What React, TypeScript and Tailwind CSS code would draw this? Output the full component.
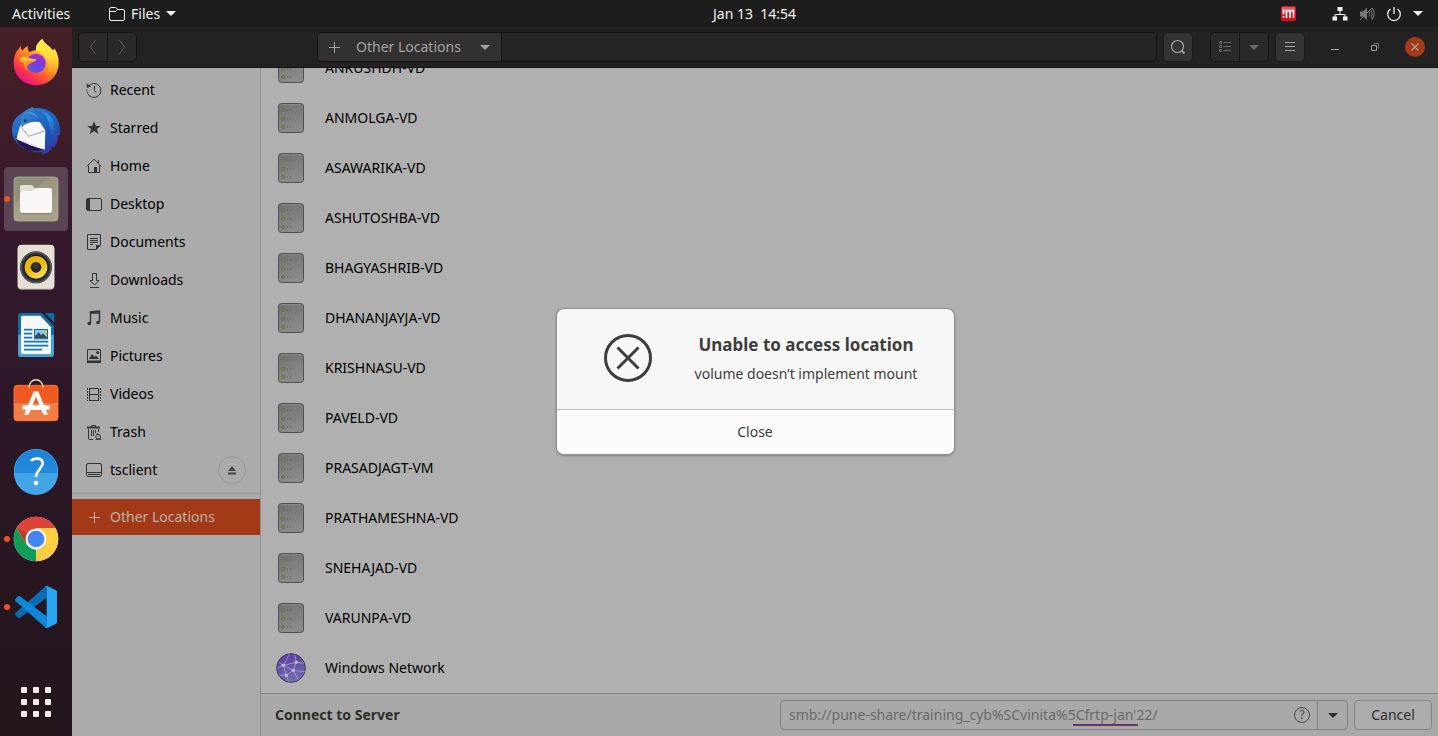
import type { ReactNode } from "react";

const hosts = [
  "ANKUSHDH-VD",
  "ANMOLGA-VD",
  "ASAWARIKA-VD",
  "ASHUTOSHBA-VD",
  "BHAGYASHRIB-VD",
  "DHANANJAYJA-VD",
  "KRISHNASU-VD",
  "PAVELD-VD",
  "PRASADJAGT-VM",
  "PRATHAMESHNA-VD",
  "SNEHAJAD-VD",
  "VARUNPA-VD",
];

/* ---------- dock icons ---------- */

function DockSvg({ viewBox, children }: { viewBox: string; children: ReactNode }) {
  return (
    <svg viewBox={viewBox} className="size-12" aria-hidden="true">
      {children}
    </svg>
  );
}

function FirefoxIcon() {
  return (
    <DockSvg viewBox="36 117 144 144">
      <defs>
        <linearGradient id="ffBody" x1="0.85" y1="0.1" x2="0.25" y2="0.95">
          <stop offset="0" stopColor="#fff44f" />
          <stop offset="0.3" stopColor="#ffb52b" />
          <stop offset="0.55" stopColor="#ff7a26" />
          <stop offset="0.78" stopColor="#ff3a4a" />
          <stop offset="1" stopColor="#e2127e" />
        </linearGradient>
        <linearGradient id="ffFlame" x1="0.4" y1="0" x2="0.4" y2="1">
          <stop offset="0" stopColor="#fff44f" />
          <stop offset="0.5" stopColor="#ffd83a" />
          <stop offset="1" stopColor="#ff9a2a" stopOpacity="0" />
        </linearGradient>
        <linearGradient id="ffGlobe" x1="0.7" y1="0" x2="0.3" y2="1">
          <stop offset="0" stopColor="#a32bd6" />
          <stop offset="0.5" stopColor="#7a3be0" />
          <stop offset="1" stopColor="#4f5fd8" />
        </linearGradient>
        <linearGradient id="ffFace" x1="0" y1="0" x2="0.7" y2="1">
          <stop offset="0" stopColor="#ffbd2e" />
          <stop offset="1" stopColor="#ff6b2b" />
        </linearGradient>
      </defs>
      <path
        d="M127 117C130 128 147 137 157 149C160 153 163 150 162 145C173 159 177 175 176 190C175 230 145 256 109 256C70 256 41 228 41 190C41 172 46 156 56 148L61 137C62 143 64 148 67 152L74 144L84 138C82 146 84 152 89 157C96 152 104 151 109 150C107 138 113 128 127 117Z"
        fill="url(#ffBody)"
      />
      <path
        d="M127 117C130 128 147 137 157 149C160 153 163 150 162 145C176 165 178 192 168 212C160 228 146 234 136 228C150 208 146 178 126 162C118 156 110 154 108 150C107 138 113 128 127 117Z"
        fill="url(#ffFlame)"
      />
      <circle cx="108" cy="190" r="29" fill="url(#ffGlobe)" />
      <path
        d="M57 178C64 168 78 168 88 174C94 177 102 176 109 178C108 185 100 186 94 189C82 193 78 204 84 213C76 210 70 202 72 190C66 190 60 184 57 178Z"
        fill="url(#ffFace)"
      />
      <path d="M60 176C72 170 88 176 107 179C96 183 76 184 60 176Z" fill="#ffcf3a" />
    </DockSvg>
  );
}

function ThunderbirdIcon() {
  return (
    <DockSvg viewBox="36 321 144 144">
      <defs>
        <linearGradient id="tbBody" x1="0.2" y1="0" x2="0.8" y2="1">
          <stop offset="0" stopColor="#2a78cc" />
          <stop offset="0.5" stopColor="#1f62be" />
          <stop offset="1" stopColor="#37349c" />
        </linearGradient>
        <linearGradient id="tbHead" x1="0" y1="0" x2="1" y2="1">
          <stop offset="0" stopColor="#3c8fd6" />
          <stop offset="1" stopColor="#1b5fb6" />
        </linearGradient>
        <linearGradient id="tbWing" x1="0" y1="0" x2="0.6" y2="1">
          <stop offset="0" stopColor="#1e7fd4" stopOpacity="0.2" />
          <stop offset="0.5" stopColor="#2b9ae6" />
          <stop offset="1" stopColor="#2057b8" stopOpacity="0.4" />
        </linearGradient>
      </defs>
      <path
        d="M90 327C125 318 160 332 172 358C179 373 182 392 180 407L174 404C175 420 170 434 162 443L158 438C154 452 142 461 124 464L128 456C110 460 78 452 60 438C44 424 36 408 36 389C36 366 48 350 63 342C68 336 78 330 90 327Z"
        fill="url(#tbBody)"
      />
      <path d="M46 408C48 427 62 443 84 450C102 455 122 454 134 448L74 425Z" fill="#261650" />
      <path d="M60 378L72 368L118 364L137 393L134 449L92 436L49 417C53 404 57 390 60 378Z" fill="#f8f8fa" />
      <path d="M49 417L74 424L134 449L92 436Z" fill="#dcdce4" />
      <path d="M61 380L86 409L136 392" fill="none" stroke="#70747c" strokeWidth="2" />
      <path d="M102 328C128 330 146 352 150 382C152 402 146 420 138 434C158 420 168 396 162 368C152 342 126 322 102 328Z" fill="url(#tbWing)" />
      <path
        d="M97 321C88 325 80 328 74 335C64 347 58 362 66 381C70 375 78 371 88 368C98 364 110 364 120 367C118 352 112 342 101 335L102 326Z"
        fill="url(#tbHead)"
      />
      <path d="M78 338C90 332 106 338 118 358C108 348 94 340 78 338Z" fill="#4aa5e6" opacity="0.7" />
      <path d="M137 391L144 384L144 397L152 390L150 408L158 402L154 420L146 431L135 436Z" fill="#1c50b0" />
      <ellipse cx="76" cy="362" rx="4" ry="4" fill="#132c50" />
      <path d="M62 366L74 372L67 382Z" fill="#5a84ac" />
    </DockSvg>
  );
}

function FilesDockIcon() {
  return (
    <DockSvg viewBox="36 45 144 144">
      <defs>
        <linearGradient id="fmBg" x1="0" y1="0" x2="0" y2="1">
          <stop offset="0" stopColor="#9a9582" />
          <stop offset="1" stopColor="#a8a28c" />
        </linearGradient>
      </defs>
      <rect x="41" y="52" width="134" height="134" rx="12" fill="#5a5648" />
      <rect x="42" y="51" width="132" height="132" rx="11" fill="url(#fmBg)" stroke="#bdb8a6" strokeWidth="2" />
      <path d="M44 128V60Q44 53 52 53H150Z" fill="#8c8775" opacity="0.6" />
      <path d="M60 112V80Q60 75 65 75H93Q97 75 99 78L104 84V112Z" fill="#e3dfd2" />
      <path d="M60 98Q60 93 66 93H92Q97 93 101 88Q104 84 109 84H150Q156 84 156 90V156Q156 161 150 161H66Q60 161 60 156Z" fill="#7d7866" />
      <path d="M60 98Q60 93 66 93H92Q97 93 101 88Q104 84 109 84H150Q156 84 156 90V153Q156 159 150 159H66Q60 159 60 153Z" fill="#f9f8f6" />
    </DockSvg>
  );
}

function RhythmboxIcon() {
  return (
    <DockSvg viewBox="36 249 144 144">
      <defs>
        <linearGradient id="rbCone" x1="0" y1="0" x2="0.6" y2="1">
          <stop offset="0" stopColor="#e6ab05" />
          <stop offset="0.6" stopColor="#efbd16" />
          <stop offset="1" stopColor="#f8dc5a" />
        </linearGradient>
      </defs>
      <rect x="53" y="255" width="110" height="134" rx="12" fill="#a39f92" />
      <rect x="53" y="254" width="110" height="132" rx="12" fill="#e4e0d6" />
      <circle cx="108" cy="322" r="48" fill="#33333b" />
      <circle cx="108" cy="322" r="46" fill="none" stroke="#66666c" strokeWidth="3" />
      <circle cx="108" cy="322" r="38" fill="#1c1c26" />
      <circle cx="108" cy="322" r="34" fill="url(#rbCone)" />
      <circle cx="108" cy="322" r="16" fill="#26272c" />
      <circle cx="108" cy="318" r="9" fill="#36383e" />
    </DockSvg>
  );
}

function WriterIcon() {
  return (
    <DockSvg viewBox="36 453 144 144">
      <path d="M64 459H126L162 497V582Q162 591 153 591H63Q54 591 54 582V469Q54 459 64 459Z" fill="#0f6ea6" />
      <path d="M54 525H162V582Q162 591 153 591H63Q54 591 54 582Z" fill="#46a2d3" />
      <path d="M68 467H121L153 502V577Q153 582 148 582H68Q63 582 63 577V472Q63 467 68 467Z" fill="#f7f9fb" />
      <path d="M126 459L162 497V488L134 459Z" fill="#2b1a2b" />
      <path d="M134 459H157Q163 459 163 465V488Z" fill="#0c6aa4" />
      <path d="M72 509H97M72 521H97M72 533H97M72 545H145M72 557H145M72 569H126" stroke="#0f78b4" strokeWidth="5" />
      <rect x="102" y="507" width="42" height="31" fill="#0f6ea6" />
      <rect x="105" y="510" width="36" height="25" fill="#8cc8ea" />
      <path d="M132 510H141V521Q133 519 132 510Z" fill="#f0bb1d" />
      <path d="M105 535V529L116 516L123 526L128 520L141 532V535Z" fill="#3c4a55" />
    </DockSvg>
  );
}

function SoftwareIcon() {
  return (
    <DockSvg viewBox="36 117 144 144">
      <rect x="41" y="137" width="134" height="107" rx="11" fill="#8e3a14" />
      <rect x="42" y="136" width="132" height="106" rx="10" fill="#f05a22" stroke="#f98a55" strokeWidth="2" />
      <path d="M42 189H174V232Q174 242 164 242H52Q42 242 42 232Z" fill="#f27d47" />
      <path d="M87 144C87 111 129 111 129 144" fill="none" stroke="#f0dcae" strokeWidth="4" />
      <path d="M101 154H115L144 224H130L108 170L86 224H72Z" fill="#fff5ee" />
      <rect x="66" y="196" width="84" height="14" rx="7" fill="#fff" />
    </DockSvg>
  );
}

function HelpIcon() {
  return (
    <DockSvg viewBox="36 321 144 144">
      <defs>
        <linearGradient id="hpTop" x1="0" y1="0" x2="0" y2="1">
          <stop offset="0" stopColor="#1b82d8" />
          <stop offset="1" stopColor="#2790dc" />
        </linearGradient>
      </defs>
      <circle cx="108" cy="393" r="66" fill="url(#hpTop)" />
      <path d="M42 399H174A66 66 0 0 1 42 399Z" fill="#42a5e6" />
      <circle cx="108" cy="393" r="65" fill="none" stroke="#4faae8" strokeWidth="2" />
      <path d="M93 363C100 353 128 352 128 370C128 386 108 390 108 411" fill="none" stroke="#fff" strokeWidth="8" />
      <circle cx="108" cy="429" r="7" fill="#fff" />
    </DockSvg>
  );
}

function ChromeIcon() {
  return (
    <DockSvg viewBox="0 0 48 48">
      <circle cx="24" cy="24" r="22.300" fill="#fff" />
      <path d="M24 24L4.700 12.900A22.300 22.300 0 0 1 43.300 12.900H24Z" fill="#db4437" />
      <path d="M24 13H43.300A22.300 22.300 0 0 1 24 46.300L33.600 29.500Z" fill="#ffcd40" />
      <path d="M4.700 12.900L14.400 29.500L24 35L33.600 29.500L24 46.300A22.300 22.300 0 0 1 4.700 12.900Z" fill="#0f9d58" />
      <path d="M4.700 12.900L14.400 29.500L18 15L24 13Z" fill="#db4437" />
      <path d="M4.700 12.900L14.400 29.500L17 20Z" fill="#a52d22" opacity="0.5" />
      <path d="M24 35L33.600 29.500L24 46.300Z" fill="#ffcd40" />
      <circle cx="24" cy="24" r="10.500" fill="#f4f4f4" />
      <circle cx="24" cy="24" r="8.300" fill="#4285f4" />
    </DockSvg>
  );
}

function CodeIcon() {
  return (
    <DockSvg viewBox="36 129 144 144">
      <path d="M138 138L46 219Q43 223 47 226L54 233Q58 236 62 232L140 173V140Z" fill="#0a6cb4" />
      <path d="M138 264L46 183Q43 179 47 176L54 169Q58 166 62 170L140 229V262Z" fill="#0d88d8" />
      <path d="M136 139L138 138Q141 137 144 139L168 151Q171 153 171 157V245Q171 249 168 251L144 263Q139 265 136 262L140 258V144Z" fill="#27a5f2" />
    </DockSvg>
  );
}

const dockApps: { name: string; icon: ReactNode; running?: boolean; active?: boolean }[] = [
  { name: "Firefox", icon: <FirefoxIcon /> },
  { name: "Thunderbird", icon: <ThunderbirdIcon /> },
  { name: "Files", icon: <FilesDockIcon />, running: true, active: true },
  { name: "Rhythmbox", icon: <RhythmboxIcon /> },
  { name: "Writer", icon: <WriterIcon /> },
  { name: "Software", icon: <SoftwareIcon /> },
  { name: "Help", icon: <HelpIcon /> },
  { name: "Chrome", icon: <ChromeIcon />, running: true },
  { name: "Code", icon: <CodeIcon />, running: true },
];

/* ---------- small symbolic icons ---------- */

function Sym({ children }: { children: ReactNode }) {
  return (
    <svg viewBox="0 0 16 16" className="size-4 shrink-0" fill="none" stroke="currentColor" aria-hidden="true">
      {children}
    </svg>
  );
}

function Caret() {
  return (
    <svg viewBox="0 0 10 5" className="h-[5px] w-[10px] shrink-0" fill="currentColor" aria-hidden="true">
      <path d="M0 0H10L5 5Z" />
    </svg>
  );
}

const plusIcon = (
  <Sym>
    <path d="M8.500 3V14M3 8.500H14" />
  </Sym>
);

const places: { name: string; icon: ReactNode }[] = [
  {
    name: "Recent",
    icon: (
      <Sym>
        <path d="M2.200 4.500A7 7 0 1 1 1.600 11.500M8.500 4V8.500L10 10.500" />
        <path d="M0.500 1.500L1 6L5 4.500Z" fill="currentColor" stroke="none" />
        <path d="M0.800 7.300V8.500M1 9.500L1.500 10.800" />
      </Sym>
    ),
  },
  {
    name: "Starred",
    icon: (
      <Sym>
        <path
          d="M8 1.300L9.900 6H14.700L10.900 9L12.300 14L8 11.100L3.700 14L5.100 9L1.300 6H6.100Z"
          fill="currentColor"
          stroke="none"
        />
      </Sym>
    ),
  },
  {
    name: "Home",
    icon: (
      <Sym>
        <path d="M0.700 8.500L8 1.200L15.300 8.500M2.500 7.500V14.500H13.500V7.500M12.500 5V2" />
        <path d="M8 9H11V15H8Z" fill="currentColor" stroke="none" />
      </Sym>
    ),
  },
  {
    name: "Desktop",
    icon: (
      <Sym>
        <rect x="0.500" y="2.500" width="15" height="12" rx="1.500" />
        <path d="M1 3H4V14H1Z" fill="currentColor" stroke="none" />
      </Sym>
    ),
  },
  {
    name: "Documents",
    icon: (
      <Sym>
        <path d="M1.500 0.500H14.500V11L10.500 15.500H1.500ZM4 4.500H12M4 6.500H12M4 8.500H12M4 10.500H7" />
        <path d="M10 15.500V11H14.500Z" fill="currentColor" stroke="none" />
      </Sym>
    ),
  },
  {
    name: "Downloads",
    icon: (
      <Sym>
        <path d="M6.500 1.500H10.500V8.500H13L8.500 13L4 8.500H6.500ZM4 15.500H13" />
      </Sym>
    ),
  },
  {
    name: "Music",
    icon: (
      <Sym>
        <path d="M4.500 13V2L13.500 1V12M4.500 3H13.500" strokeWidth="1.400" />
        <ellipse cx="3.300" cy="13.500" rx="1.900" ry="1.700" fill="currentColor" stroke="none" />
        <ellipse cx="12" cy="12.500" rx="1.900" ry="1.700" fill="currentColor" stroke="none" />
      </Sym>
    ),
  },
  {
    name: "Pictures",
    icon: (
      <Sym>
        <path d="M1.500 1.500H14.500V14.500H1.500Z" />
        <path d="M1 12.500H15V15H1ZM3 11L6 6L8.500 9L10 7.500L13 11Z" fill="currentColor" stroke="none" />
        <circle cx="11.700" cy="4.500" r="1.500" fill="currentColor" stroke="none" />
      </Sym>
    ),
  },
  {
    name: "Videos",
    icon: (
      <Sym>
        <path d="M3.500 2V15M12.500 2V15M3 2.500H13M3 8.500H13M3 14.500H13" />
        <path d="M1.500 2V15M14.500 2V15" strokeDasharray="2 1" />
      </Sym>
    ),
  },
  {
    name: "Trash",
    icon: (
      <Sym>
        <path d="M5.500 3V1.500H9.500V3M2.500 5V14.500Q2.500 15.500 3.500 15.500H7M12.500 5V8M5.500 6V12M7.500 6V12M9.500 6V9" />
        <path d="M1 3.500H14" strokeWidth="2" />
        <circle cx="12.200" cy="12.700" r="2.400" />
        <path d="M9.500 15.300H15.500M11 9.500L13 11" />
      </Sym>
    ),
  },
];

function ServerIcon() {
  return (
    <svg viewBox="0 0 78 90" className="h-[30px] w-[26px]" aria-hidden="true">
      <defs>
        <linearGradient id="srvBg" x1="0" y1="0" x2="0.3" y2="1">
          <stop offset="0" stopColor="#717171" />
          <stop offset="1" stopColor="#8b8b8b" />
        </linearGradient>
      </defs>
      <rect x="1.500" y="1.500" width="75" height="87" rx="9" fill="url(#srvBg)" stroke="#505050" strokeWidth="3" />
      <path d="M9 5H69" stroke="#8d8d8d" strokeWidth="3" />
      {[21, 48, 72].map((y) => (
        <g key={y}>
          <circle cx="15" cy={y} r="4.500" fill="#759344" stroke="#596448" strokeWidth="2" />
          <path d={`M27 ${y}H30M36 ${y}H39`} stroke="#555" strokeWidth="3" />
        </g>
      ))}
    </svg>
  );
}

function NetworkIcon() {
  return (
    <svg viewBox="0 0 90 90" className="size-[30px]" aria-hidden="true">
      <defs>
        <linearGradient id="netBg" x1="0" y1="0" x2="0.3" y2="1">
          <stop offset="0" stopColor="#5e3798" />
          <stop offset="1" stopColor="#6d6fb0" />
        </linearGradient>
      </defs>
      <circle cx="45" cy="45" r="43" fill="url(#netBg)" stroke="#43395c" strokeWidth="3" />
      <path
        d="M8 28L22 37L61 28L84 30M22 37L52 52L86 56M61 28L52 52L31 67L10 66M22 37L31 67L38 86M22 37L40 4M61 28L56 6M52 52L66 80M22 37L4 46"
        stroke="#a99fc6"
        strokeWidth="2.500"
        fill="none"
      />
      {[[22, 37], [61, 28], [52, 52], [31, 67]].map(([x, y]) => (
        <circle key={x} cx={x} cy={y} r="5" fill="#c3bcd4" />
      ))}
    </svg>
  );
}

/* ---------- page sections ---------- */

function TopBar() {
  return (
    <header className="flex h-[27px] shrink-0 items-center bg-[#1d1d1d] text-[#f0f0f0]">
      <div className="flex flex-[0_0_calc(50%-6px)] items-center">
        <button className="ml-3 w-[97px] text-left">Activities</button>
        <button className="flex items-center gap-[6px]">
          <Sym>
            <path d="M0.500 3.500V13Q0.500 14.500 2 14.500H14Q15.500 14.500 15.500 13V5Q15.500 3.500 14 3.500H8.500L7.500 2Q7 1.500 6.500 1.500H2Q0.500 1.500 0.500 3.500ZM0.500 5.500H6.500L8.500 3.500" />
          </Sym>
          <span>Files</span>
          <Caret />
        </button>
      </div>
      <time className="whitespace-pre">Jan 13  14:54</time>
      <div className="ml-auto flex items-center pr-[15px]">
        <svg viewBox="0 0 15 15" className="mr-9 size-[15px]" aria-label="Mail indicator">
          <rect width="15" height="15" rx="2" fill="#d41220" />
          <rect x="1" y="1" width="13" height="6" rx="1" fill="#e8535c" />
          <path d="M2.500 3V8.500M2.500 10V11.500M5.500 12V4.500H12.500V12M9 4.500V12" stroke="#fff" strokeWidth="1.600" fill="none" />
        </svg>
        <button aria-label="System menu" className="flex items-center gap-[11px]">
          <Sym>
            <path d="M8 4V8M3 12V8.500H13V12" />
            <path d="M5.500 1H10.500V5H5.500ZM0.500 10.500H5V14.500H0.500ZM11 10.500H15.500V14.500H11Z" fill="currentColor" stroke="none" />
          </Sym>
          <span className="text-[#777]">
            <Sym>
              <path d="M1 5.500H4L8 1.500V14L4 10.500H1Z" fill="currentColor" stroke="none" />
              <path d="M10 6Q11.500 8 10 10.500M12 4Q14.500 8 12 12.500M13.500 2Q17 8 13 14M1 14L13 2" />
            </Sym>
          </span>
          <Sym>
            <path d="M4.500 3A6.300 6.300 0 1 0 11.500 3M8 1V8" strokeWidth="1.300" />
          </Sym>
          <Caret />
        </button>
      </div>
    </header>
  );
}

function Dock() {
  return (
    <nav
      aria-label="Dock"
      className="flex w-[72px] shrink-0 flex-col items-center gap-1 bg-linear-to-b from-[#471f26] via-[#32182c] via-35% to-[#21151b] pt-1"
    >
      {dockApps.map((app) => (
        <button
          key={app.name}
          aria-label={app.name}
          className={
            app.active
              ? "relative flex size-16 shrink-0 items-center justify-center rounded bg-[#5b4453]"
              : "relative flex size-16 shrink-0 items-center justify-center rounded"
          }
        >
          {app.running && <span className="absolute top-[29px] left-0 size-[6px] rounded-full bg-[#e95420]" />}
          {app.icon}
        </button>
      ))}
      <button aria-label="Show Applications" className="mt-auto mb-[19px] grid grid-cols-3 gap-[6px]">
        {Array.from({ length: 9 }, (_, i) => (
          <span key={i} className="size-[6px] rounded-[1px] bg-[#f0eeeb]" />
        ))}
      </button>
    </nav>
  );
}

function HeaderBar() {
  return (
    <div className="flex h-[41px] shrink-0 items-center border-b border-[#171516] bg-[#242122] px-[6px] text-[#a5a3a1]">
      <div className="flex h-[30px] w-[59px] overflow-hidden rounded-[5px] border border-[#151314] bg-[#2a2829] text-[#5f5d5d]">
        <button aria-label="Back" className="flex flex-1 items-center justify-center border-r border-[#151314]">
          <Sym>
            <path d="M10.500 1L5.500 8L10.500 15" />
          </Sym>
        </button>
        <button aria-label="Forward" className="flex flex-1 items-center justify-center">
          <Sym>
            <path d="M5.500 1L10.500 8L5.500 15" />
          </Sym>
        </button>
      </div>
      <div className="mr-[6px] ml-[180px] flex h-[30px] flex-1 overflow-hidden rounded-[5px] border border-[#131112] bg-[#272425]">
        <button className="flex items-center border-r border-[#131112] bg-[#323031] pr-[11px] pl-2">
          {plusIcon}
          <span className="mr-[19px] ml-[14px]">Other Locations</span>
          <Caret />
        </button>
      </div>
      <button aria-label="Search" className="flex size-[30px] items-center justify-center rounded-[5px] border border-[#1d1b1c] bg-[#353233]">
        <Sym>
          <circle cx="7.500" cy="7.500" r="6" strokeWidth="1.200" />
          <path d="M11.500 11.500L14.500 14.500" strokeWidth="1.800" />
        </Sym>
      </button>
      <div className="ml-[17px] flex h-[30px] w-[59px] overflow-hidden rounded-[5px] border border-[#151314] bg-[#2a2829] text-[#6a6868]">
        <button aria-label="List view" className="flex flex-1 items-center justify-center border-r border-[#151314]">
          <Sym>
            <path d="M2.500 2.500H4.500V4.500H2.500ZM2.500 6.500H4.500V8.500H2.500ZM2.500 10.500H4.500V12.500H2.500ZM6.500 3.500H14M6.500 7.500H14M6.500 11.500H14" />
          </Sym>
        </button>
        <button aria-label="View options" className="flex flex-1 items-center justify-center">
          <Caret />
        </button>
      </div>
      <button aria-label="Menu" className="ml-[6px] flex size-[30px] items-center justify-center rounded-[5px] border border-[#1d1b1c] bg-[#353233]">
        <Sym>
          <path d="M3 3.500H13M3 7.500H13M3 11.500H13" strokeWidth="1.200" />
        </Sym>
      </button>
      <div className="ml-[20px] flex items-center gap-5 pr-[7px]">
        <button aria-label="Minimize" className="flex size-5 items-center justify-center">
          <Sym>
            <path d="M4 10.500H12" />
          </Sym>
        </button>
        <button aria-label="Restore" className="flex size-5 items-center justify-center">
          <Sym>
            <path d="M4.500 6.500H9.500V11.500H4.500Z" />
            <path d="M6.500 4.500H11.500V9.500" className="text-[#777]" />
          </Sym>
        </button>
        <button aria-label="Close window" className="flex size-5 items-center justify-center rounded-full bg-[#a33a17]">
          <Sym>
            <path d="M4.500 4.500L11.500 11.500M11.500 4.500L4.500 11.500" strokeWidth="1.200" />
          </Sym>
        </button>
      </div>
    </div>
  );
}

function Sidebar() {
  return (
    <aside className="w-[189px] shrink-0 border-r border-[#919191] bg-[#ababab] pt-[3px] text-black">
      <ul>
        {places.map((place) => (
          <li key={place.name}>
            <a href="#" className="flex h-[38px] items-center gap-2 pl-[14px]">
              <span className="text-[#333]">{place.icon}</span>
              {place.name}
            </a>
          </li>
        ))}
        <li className="flex h-[38px] items-center pr-[14px] pl-[14px]">
          <a href="#" className="flex flex-1 items-center gap-2">
            <span className="text-[#333]">
              <Sym>
                <path d="M2 1.500H14Q15.500 1.500 15.500 3V12.500Q15.500 14.500 14 14.500H2Q0.500 14.500 0.500 12.500V3Q0.500 1.500 2 1.500ZM1 10.500H15M2 12.500H14" />
              </Sym>
            </span>
            tsclient
          </a>
          <button aria-label="Eject tsclient" className="flex size-7 items-center justify-center rounded-full border border-[#9a9a9a] text-[#444]">
            <Sym>
              <path d="M8 4L12 9H4ZM4 10.500H12V12.500H4Z" fill="currentColor" stroke="none" />
            </Sym>
          </button>
        </li>
      </ul>
      <hr className="mt-1 mb-[5px] border-[#999]" />
      <a href="#" className="flex h-9 items-center gap-2 bg-[#a33a17] pl-[14px] text-[#bdb0aa]">
        {plusIcon}
        Other Locations
      </a>
    </aside>
  );
}

function LocationRow({ name, icon }: { name: string; icon: ReactNode }) {
  return (
    <li className="flex h-[50px] shrink-0 items-center gap-[19px] pl-[15px]">
      <span className="flex w-[30px] justify-center">{icon}</span>
      {name}
    </li>
  );
}

function ConnectBar() {
  return (
    <form className="flex h-[43px] shrink-0 items-center border-t border-[#858585] bg-[#a9a9a9] pr-[6px] pl-[14px] text-[#2e2e2e]">
      <label htmlFor="server" className="flex-1 font-bold">
        Connect to Server
      </label>
      <div className="flex h-[30px] w-[568px] rounded-[4px] border border-[#808080]">
        <div className="relative flex flex-1 items-center pr-[7px]">
          <input
            id="server"
            defaultValue="smb://pune-share/training_cyb%SCvinita%5Cfrtp-jan'22/"
            className="min-w-0 flex-1 bg-transparent pl-2 text-[#6a6a6a] outline-none"
          />
          <span className="absolute bottom-[3px] left-[292px] h-[2px] w-[65px] bg-[#66336a]" />
          <button type="button" aria-label="Server address help" className="flex size-4 items-center justify-center rounded-full border border-[#4a4a4a] text-xs text-[#4a4a4a]">
            ?
          </button>
        </div>
        <button type="button" aria-label="Recent servers" className="flex w-[30px] items-center justify-center border-l border-[#808080]">
          <Caret />
        </button>
      </div>
      <button type="button" className="ml-[6px] h-[30px] w-[78px] rounded-[4px] border border-[#858585] bg-[#adadad]">
        Cancel
      </button>
    </form>
  );
}

function ErrorDialog() {
  return (
    <div className="absolute inset-0 flex items-center justify-center">
      <div
        role="alertdialog"
        aria-labelledby="dialog-title"
        aria-describedby="dialog-message"
        className="w-[397px] overflow-hidden rounded-[7px] bg-[#f7f7f7] text-[#3d3d3d] shadow-[0_0_0_1px_#8f8f8f,0_1px_3px_#555]"
      >
        <div className="flex h-[100px] items-start pt-[25px] pl-[47px]">
          <svg viewBox="0 0 48 48" className="size-12 shrink-0" fill="none" stroke="currentColor" aria-hidden="true">
            <circle cx="24" cy="24" r="22.500" strokeWidth="3" />
            <path d="M13.500 13.500L34.500 34.500M34.500 13.500L13.500 34.500" strokeWidth="3" />
          </svg>
          <div className="flex-1 pl-[7px] text-center">
            <h1 id="dialog-title" className="text-[17px] leading-[22px] font-bold">
              Unable to access location
            </h1>
            <p id="dialog-message" className="mt-2 leading-5">
              volume doesn’t implement mount
            </p>
          </div>
        </div>
        <button className="h-[45px] w-full border-t border-[#bcbcbc] bg-[#fcfcfc]">Close</button>
      </div>
    </div>
  );
}

export default function App() {
  return (
    <div className="flex h-screen flex-col overflow-hidden font-['Noto_Sans',sans-serif] text-[14px] leading-5">
      <TopBar />
      <div className="flex min-h-0 flex-1">
        <Dock />
        <main className="relative flex min-w-0 flex-1 flex-col bg-[#b0b0b0]">
          <HeaderBar />
          <div className="flex min-h-0 flex-1">
            <Sidebar />
            <section className="flex min-w-0 flex-1 flex-col">
              <ul className="flex min-h-0 flex-1 flex-col justify-end overflow-hidden text-black">
                {hosts.map((host) => (
                  <LocationRow key={host} name={host} icon={<ServerIcon />} />
                ))}
                <LocationRow name="Windows Network" icon={<NetworkIcon />} />
              </ul>
              <ConnectBar />
            </section>
          </div>
          <ErrorDialog />
        </main>
      </div>
    </div>
  );
}
